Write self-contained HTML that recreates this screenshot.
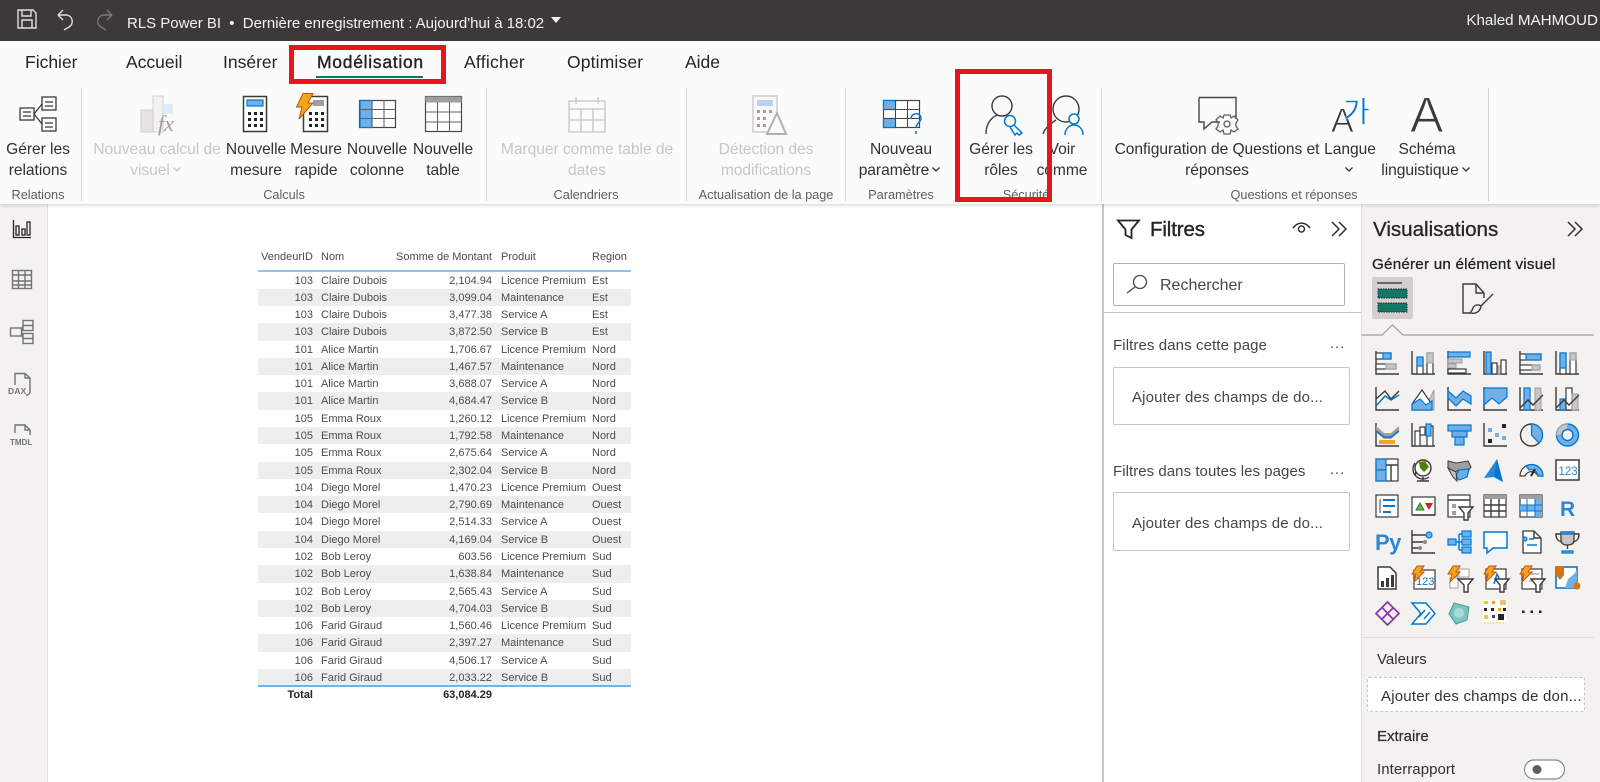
<!DOCTYPE html>
<html lang="fr"><head><meta charset="utf-8"><title>RLS Power BI</title>
<style>
html,body{margin:0;padding:0;width:1600px;height:782px;overflow:hidden;background:#fff;font-family:"Liberation Sans","Noto Sans CJK KR",sans-serif;color:#252423}
body{filter:blur(.3px)}
.a{position:absolute}
.t{position:absolute;white-space:nowrap;line-height:20px}
.c{transform:translateX(-50%);text-align:center}
.r{font-size:15.6px;line-height:21px;letter-spacing:-.05px;color:#323130}
.d{color:#c8c6c4}
.g{font-size:12.8px;color:#605e5c;letter-spacing:-.05px}
.tab{font-size:17.5px;color:#252423;top:52px}
.sep{position:absolute;top:88px;height:113px;width:1px;background:#d6d4d2}
.box{position:absolute;border:1px solid #c8c6c4;border-radius:2px;background:#fff;box-sizing:border-box}
.red{position:absolute;border:5px solid #e8141e;box-sizing:border-box;z-index:5}
.row{display:grid;grid-template-columns:55px 8px 171px 9px 91px 39px;height:17.29px;line-height:17.29px;font-size:11px;color:#4d4b49;white-space:nowrap}
.row:nth-child(even){background:#eeeeee}
.row>span{position:relative;top:1px}
.row span:nth-child(1),.row span:nth-child(3){text-align:right}
.sp{display:inline-block;width:14px}
.p15{font-size:15px;color:#484644}
svg{position:absolute;left:0;top:0;z-index:2}
svg .k{fill:none;stroke:#3b3a39;stroke-width:1.4}
svg .w{fill:#fff;stroke:#3b3a39;stroke-width:1.2}
svg .b{fill:#71afe5;stroke:#0078d4;stroke-width:1.2}
svg .y{fill:#c8c6c4;stroke:#a19f9d;stroke-width:1}
svg .s{fill:none;stroke:#0078d4;stroke-width:1.5}
svg .q{fill:none;stroke:#c0bebc;stroke-width:1.4}
svg .o{fill:#f2a71b;stroke:#ca5010;stroke-width:1}
</style></head><body>

<div class="a" style="left:0;top:0;width:1600px;height:41px;background:#3b3a39"></div>
<div class="t" style="left:127px;top:14px;font-size:15px;color:#f3f2f1;letter-spacing:-.02px">RLS Power BI &nbsp;•&nbsp; Dernière enregistrement : Aujourd'hui à 18:02</div>
<div class="t" style="right:2px;top:11px;font-size:15.2px;color:#f3f2f1">Khaled MAHMOUD</div>

<div class="a" style="left:0;top:41px;width:1600px;height:163px;background:#fbfbfb;box-shadow:0 1px 4px rgba(0,0,0,.18);z-index:1"></div>
<div class="a" style="left:0;top:204px;width:47px;height:578px;background:#f3f2f1;border-right:1px solid #e1dfdd"></div>
<div class="a" style="left:1102px;top:204px;width:2px;height:578px;background:#c8c6c4"></div>
<div class="a" style="left:1361px;top:204px;width:239px;height:578px;background:#f3f2f1;border-left:1px solid #e1dfdd"></div>
<div class="a" style="left:1104px;top:312px;width:257px;height:1px;background:#c8c6c4"></div>
<div class="a" style="left:1362px;top:637px;width:232px;height:1px;background:#e1dfdd"></div>

<div style="position:absolute;z-index:3;left:0;top:0">
<div class="t tab" style="left:25px">Fichier</div>
<div class="t tab" style="left:126px">Accueil</div>
<div class="t tab" style="left:223px">Insérer</div>
<div class="t tab" style="left:317px;-webkit-text-stroke:.4px #252423;letter-spacing:.72px">Modélisation</div>
<div class="t tab" style="left:464px;letter-spacing:.25px">Afficher</div>
<div class="t tab" style="left:567px;letter-spacing:.15px">Optimiser</div>
<div class="t tab" style="left:685px">Aide</div>
<div class="a" style="left:316px;top:76px;width:107px;height:2px;background:#117865"></div>

<div class="sep" style="left:81px"></div><div class="sep" style="left:486px"></div><div class="sep" style="left:686px"></div><div class="sep" style="left:845px"></div><div class="sep" style="left:1101px"></div><div class="sep" style="left:1488px"></div>

<div class="t c r" style="left:38px;top:139px">Gérer les<br>relations</div>
<div class="t c r d" style="left:157px;top:139px">Nouveau calcul de<br>visuel<i class="sp"></i></div>
<div class="t c r" style="left:256px;top:139px">Nouvelle<br>mesure</div>
<div class="t c r" style="left:316px;top:139px">Mesure<br>rapide</div>
<div class="t c r" style="left:377px;top:139px">Nouvelle<br>colonne</div>
<div class="t c r" style="left:443px;top:139px">Nouvelle<br>table</div>
<div class="t c r d" style="left:587px;top:139px">Marquer comme table de<br>dates</div>
<div class="t c r d" style="left:766px;top:139px">Détection des<br>modifications</div>
<div class="t c r" style="left:901px;top:139px">Nouveau<br>paramètre<i class="sp"></i></div>
<div class="t c r" style="left:1001px;top:139px">Gérer les<br>rôles</div>
<div class="t c r" style="left:1062px;top:139px">Voir<br>comme</div>
<div class="t c r" style="left:1217px;top:139px">Configuration de Questions et<br>réponses</div>
<div class="t c r" style="left:1350px;top:139px">Langue</div>
<div class="t c r" style="left:1427px;top:139px">Schéma<br>linguistique<i class="sp"></i></div>

<div class="t c g" style="left:38px;top:185px">Relations</div>
<div class="t c g" style="left:284px;top:185px">Calculs</div>
<div class="t c g" style="left:586px;top:185px">Calendriers</div>
<div class="t c g" style="left:766px;top:185px">Actualisation de la page</div>
<div class="t c g" style="left:901px;top:185px">Paramètres</div>
<div class="t c g" style="left:1026px;top:185px">Sécurité</div>
<div class="t c g" style="left:1294px;top:185px">Questions et réponses</div>
</div>

<div class="red" style="left:289px;top:45px;width:157px;height:39px"></div>
<div class="red" style="left:955px;top:69px;width:97px;height:133px"></div>

<!-- table -->
<div class="a" style="left:258px;top:246px;width:373px">
<div class="row" style="height:20px;line-height:20px;background:none"><span>VendeurID</span><i></i><span style="display:none"></span><span style="position:relative"><span class="a" style="left:0">Nom</span><span class="a" style="right:0;text-align:right">Somme de Montant</span></span><i></i><span>Produit</span><span>Region</span></div>
</div>
<div class="a" style="left:258px;top:270px;width:373px;height:1.5px;background:#8fc3ec"></div>
<div class="a" style="left:258px;top:271.5px;width:373px">
<div class="row"><span>103</span><i></i><span style="text-align:left;position:relative">Claire Dubois<em class="a" style="right:0;font-style:normal">2,104.94</em></span><i></i><span>Licence Premium</span><span>Est</span></div>
<div class="row"><span>103</span><i></i><span style="text-align:left;position:relative">Claire Dubois<em class="a" style="right:0;font-style:normal">3,099.04</em></span><i></i><span>Maintenance</span><span>Est</span></div>
<div class="row"><span>103</span><i></i><span style="text-align:left;position:relative">Claire Dubois<em class="a" style="right:0;font-style:normal">3,477.38</em></span><i></i><span>Service A</span><span>Est</span></div>
<div class="row"><span>103</span><i></i><span style="text-align:left;position:relative">Claire Dubois<em class="a" style="right:0;font-style:normal">3,872.50</em></span><i></i><span>Service B</span><span>Est</span></div>
<div class="row"><span>101</span><i></i><span style="text-align:left;position:relative">Alice Martin<em class="a" style="right:0;font-style:normal">1,706.67</em></span><i></i><span>Licence Premium</span><span>Nord</span></div>
<div class="row"><span>101</span><i></i><span style="text-align:left;position:relative">Alice Martin<em class="a" style="right:0;font-style:normal">1,467.57</em></span><i></i><span>Maintenance</span><span>Nord</span></div>
<div class="row"><span>101</span><i></i><span style="text-align:left;position:relative">Alice Martin<em class="a" style="right:0;font-style:normal">3,688.07</em></span><i></i><span>Service A</span><span>Nord</span></div>
<div class="row"><span>101</span><i></i><span style="text-align:left;position:relative">Alice Martin<em class="a" style="right:0;font-style:normal">4,684.47</em></span><i></i><span>Service B</span><span>Nord</span></div>
<div class="row"><span>105</span><i></i><span style="text-align:left;position:relative">Emma Roux<em class="a" style="right:0;font-style:normal">1,260.12</em></span><i></i><span>Licence Premium</span><span>Nord</span></div>
<div class="row"><span>105</span><i></i><span style="text-align:left;position:relative">Emma Roux<em class="a" style="right:0;font-style:normal">1,792.58</em></span><i></i><span>Maintenance</span><span>Nord</span></div>
<div class="row"><span>105</span><i></i><span style="text-align:left;position:relative">Emma Roux<em class="a" style="right:0;font-style:normal">2,675.64</em></span><i></i><span>Service A</span><span>Nord</span></div>
<div class="row"><span>105</span><i></i><span style="text-align:left;position:relative">Emma Roux<em class="a" style="right:0;font-style:normal">2,302.04</em></span><i></i><span>Service B</span><span>Nord</span></div>
<div class="row"><span>104</span><i></i><span style="text-align:left;position:relative">Diego Morel<em class="a" style="right:0;font-style:normal">1,470.23</em></span><i></i><span>Licence Premium</span><span>Ouest</span></div>
<div class="row"><span>104</span><i></i><span style="text-align:left;position:relative">Diego Morel<em class="a" style="right:0;font-style:normal">2,790.69</em></span><i></i><span>Maintenance</span><span>Ouest</span></div>
<div class="row"><span>104</span><i></i><span style="text-align:left;position:relative">Diego Morel<em class="a" style="right:0;font-style:normal">2,514.33</em></span><i></i><span>Service A</span><span>Ouest</span></div>
<div class="row"><span>104</span><i></i><span style="text-align:left;position:relative">Diego Morel<em class="a" style="right:0;font-style:normal">4,169.04</em></span><i></i><span>Service B</span><span>Ouest</span></div>
<div class="row"><span>102</span><i></i><span style="text-align:left;position:relative">Bob Leroy<em class="a" style="right:0;font-style:normal">603.56</em></span><i></i><span>Licence Premium</span><span>Sud</span></div>
<div class="row"><span>102</span><i></i><span style="text-align:left;position:relative">Bob Leroy<em class="a" style="right:0;font-style:normal">1,638.84</em></span><i></i><span>Maintenance</span><span>Sud</span></div>
<div class="row"><span>102</span><i></i><span style="text-align:left;position:relative">Bob Leroy<em class="a" style="right:0;font-style:normal">2,565.43</em></span><i></i><span>Service A</span><span>Sud</span></div>
<div class="row"><span>102</span><i></i><span style="text-align:left;position:relative">Bob Leroy<em class="a" style="right:0;font-style:normal">4,704.03</em></span><i></i><span>Service B</span><span>Sud</span></div>
<div class="row"><span>106</span><i></i><span style="text-align:left;position:relative">Farid Giraud<em class="a" style="right:0;font-style:normal">1,560.46</em></span><i></i><span>Licence Premium</span><span>Sud</span></div>
<div class="row"><span>106</span><i></i><span style="text-align:left;position:relative">Farid Giraud<em class="a" style="right:0;font-style:normal">2,397.27</em></span><i></i><span>Maintenance</span><span>Sud</span></div>
<div class="row"><span>106</span><i></i><span style="text-align:left;position:relative">Farid Giraud<em class="a" style="right:0;font-style:normal">4,506.17</em></span><i></i><span>Service A</span><span>Sud</span></div>
<div class="row"><span>106</span><i></i><span style="text-align:left;position:relative">Farid Giraud<em class="a" style="right:0;font-style:normal">2,033.22</em></span><i></i><span>Service B</span><span>Sud</span></div>
</div>
<div class="a" style="left:258px;top:685px;width:373px;height:1.6px;background:#6cb4ea"></div>
<div class="t" style="right:1287px;top:685px;font-size:11px;font-weight:bold;color:#252423">Total</div>
<div class="t" style="right:1108px;top:685px;font-size:11px;font-weight:bold;color:#252423">63,084.29</div>

<!-- filters -->
<div class="t" style="left:1150px;top:220px;font-size:20.4px;-webkit-text-stroke:.4px #252423;letter-spacing:-.1px">Filtres</div>
<div class="box" style="left:1113px;top:263px;width:232px;height:43px;border-color:#b3b0ad"></div>
<div class="t" style="left:1160px;top:276px;font-size:16px;color:#484644">Rechercher</div>
<div class="t p15" style="left:1113px;top:336px;letter-spacing:.1px">Filtres dans cette page</div>
<div class="t" style="left:1330px;top:334px;font-size:14.6px;color:#484644;letter-spacing:1px">...</div>
<div class="box" style="left:1113px;top:367px;width:237px;height:58px"></div>
<div class="t p15" style="left:1132px;top:388px;letter-spacing:.16px">Ajouter des champs de do...</div>
<div class="t p15" style="left:1113px;top:462px;letter-spacing:.05px">Filtres dans toutes les pages</div>
<div class="t" style="left:1330px;top:460px;font-size:14.6px;color:#484644;letter-spacing:1px">...</div>
<div class="box" style="left:1113px;top:492px;width:237px;height:59px"></div>
<div class="t p15" style="left:1132px;top:514px;letter-spacing:.16px">Ajouter des champs de do...</div>

<!-- viz -->
<div class="t" style="left:1373px;top:220px;font-size:20.6px;-webkit-text-stroke:.3px #252423;letter-spacing:-.02px">Visualisations</div>
<div class="t" style="left:1372px;top:255px;font-size:15.2px;-webkit-text-stroke:.3px #252423;letter-spacing:.22px">Générer un élément visuel</div>
<div class="a" style="left:1372px;top:277px;width:41px;height:42px;background:#d2d0ce;border-radius:2px"></div>
<div class="t p15" style="left:1377px;top:650px;color:#323130">Valeurs</div>
<div class="a" style="left:1367px;top:677px;width:218px;height:35px;box-sizing:border-box;background:#fff;border:1px dashed #c8c6c4;border-radius:2px"></div>
<div class="t p15" style="left:1381px;top:687px;color:#323130;letter-spacing:.2px">Ajouter des champs de don...</div>
<div class="t" style="left:1377px;top:727px;font-size:15px;-webkit-text-stroke:.25px #323130;color:#323130">Extraire</div>
<div class="t p15" style="left:1377px;top:760px;color:#323130;letter-spacing:.05px">Interrapport</div>

<svg width="1600" height="782" viewBox="0 0 1600 782" xmlns="http://www.w3.org/2000/svg">
<!-- title icons -->
<g fill="none" stroke="#e1dfdd" stroke-width="1.4">
<path d="M18 10H33L36 13V28H18Z M22 10V16H31V10 M22 28V20H32V28"/>
<path d="M58 15H67A6.5 6.5 0 0 1 69 27L64 30 M58 15L63 10 M58 15L63 20"/>
</g>
<g fill="none" stroke="#797775" stroke-width="1.4"><path d="M112 15H103A6.5 6.5 0 0 0 101 27L106 30 M112 15L107 10 M112 15L107 20"/></g>
<path d="M551 17H561L556 23Z" fill="#f3f2f1"/>

<!-- chevrons -->
<g fill="none" stroke-width="1.3"><path d="M173.500 167.500L177 171L180.500 167.500" stroke="#c8c6c4"/><path d="M932.500 167.500L936 171L939.500 167.500M1345.500 167.500L1349 171L1352.500 167.500M1462.500 167.500L1466 171L1469.500 167.500" stroke="#323130"/></g>

<!-- ribbon icons -->
<g>
<g fill="none" stroke="#3b3a39" stroke-width="1.3">
<rect x="20" y="108" width="14" height="12"/><rect x="42" y="97" width="14" height="13"/><rect x="42" y="118" width="14" height="13"/>
<path d="M34 114L42 104M34 114L42 124M23 112H31M23 116H31M45 102H53M45 106H53M45 123H53M45 127H53"/></g>
<g><rect x="141" y="110" width="12" height="22" fill="#e6e5e4" stroke="#d2d0ce"/><rect x="153" y="96" width="10" height="36" fill="#f3f2f1" stroke="#d2d0ce"/><rect x="163" y="104" width="10" height="10" fill="#deecf9"/>
<text x="158" y="131" font-family="Liberation Serif" font-style="italic" font-size="22" fill="#a19f9d">fx</text></g>
<g><rect x="243.500" y="96.500" width="23" height="35" fill="#fff" stroke="#3b3a39" stroke-width="1.5"/><rect x="247" y="100" width="16" height="6" class="b"/>
<path d="M248 112h3v3h-3zM254 112h3v3h-3zM260 112h3v3h-3zM248 118h3v3h-3zM254 118h3v3h-3zM260 118h3v3h-3zM248 124h3v3h-3zM254 124h3v3h-3zM260 124h3v3h-3z" fill="#252423"/></g>
<g><rect x="303.500" y="96.500" width="24" height="35" fill="#fff" stroke="#3b3a39" stroke-width="1.5"/><rect x="313" y="100" width="11" height="6" fill="#a19f9d"/>
<path d="M309 112h3v3h-3zM315 112h3v3h-3zM321 112h3v3h-3zM309 118h3v3h-3zM315 118h3v3h-3zM321 118h3v3h-3zM309 124h3v3h-3zM315 124h3v3h-3zM321 124h3v3h-3z" fill="#252423"/>
<path class="o" d="M303 93.500H313L308 103H313L299 119L302 107H296.500Z"/></g>
<g><rect x="359.500" y="100.500" width="36" height="27" fill="#fff" stroke="#484644" stroke-width="1.2"/><rect x="360" y="100.500" width="12" height="27" class="b"/><path d="M372 100V128M384 100V128M360 109.500H395M360 118.500H395" stroke="#605e5c" fill="none"/><path d="M360 118.500H372" stroke="#0078d4"/></g>
<g><rect x="425.500" y="96.500" width="36" height="35" fill="#fff" stroke="#484644" stroke-width="1.2"/><rect x="425.500" y="96.500" width="36" height="6" fill="#a19f9d"/><path d="M437.500 102V132M449.500 102V132M426 112H461M426 122H461" stroke="#605e5c" fill="none"/></g>
<g fill="none" stroke="#c8c6c4" stroke-width="1.3"><rect x="569" y="101" width="36" height="31"/><path d="M569 109H605M581 109V132M593 109V132M569 120H605M576 97V104M598 97V104"/></g>
<g><rect x="753" y="96" width="24" height="36" fill="#faf9f8" stroke="#c8c6c4" stroke-width="1.3"/><rect x="757" y="100" width="16" height="6" fill="#b4d6f2"/><path d="M757 110h3v3h-3zM763 110h3v3h-3zM769 110h3v3h-3zM757 117h3v3h-3zM763 117h3v3h-3zM757 124h3v3h-3zM763 124h3v3h-3z" fill="#a19f9d"/><path d="M777 113L786 134H767Z" fill="#fbfbfb" stroke="#b3b0ad" stroke-width="2"/></g>
<g><rect x="883.500" y="100.500" width="36" height="27" fill="#fff" stroke="#484644" stroke-width="1.2"/><rect x="883.500" y="100.500" width="12" height="9" class="b"/><rect x="883.500" y="118.500" width="12" height="9" class="b"/><path d="M907.500 100V128M884 109.500H919M884 118.500H919M895.500 100V128" stroke="#484644" fill="none"/>
<path d="M911 119C911 112 921 112 921 118.500C921 122.500 916 123 916 128M916 131V134" class="s" stroke-width="1.8"/></g>
<g fill="none" stroke="#3b3a39" stroke-width="1.4"><circle cx="1002" cy="106" r="10"/><path d="M986 134C986 124 991 118 997 115"/></g>
<g class="s"><circle cx="1010" cy="121" r="5.500" fill="#fbfbfb"/><path d="M1014 125L1022 133L1019 135L1017 133L1015 135L1010 127"/></g>
<g fill="none" stroke="#3b3a39" stroke-width="1.4"><circle cx="1066" cy="109" r="13"/><path d="M1043 134C1045 128 1050 124 1056 120"/></g>
<g class="s"><circle cx="1074" cy="119" r="5" fill="#fbfbfb"/><path d="M1065 135C1065 128 1070 125 1074 125C1078 125 1083 128 1083 135"/></g>
<path d="M1199 97.500H1236V119M1220 122H1212L1204 129V122H1199V97.500" fill="none" stroke="#484644" stroke-width="1.4"/>
<g fill="none" stroke="#605e5c" stroke-width="1.3"><circle cx="1227" cy="124" r="3"/><path d="M1224 115H1230L1231 118L1234 116L1238 120L1236 123V126L1238 129L1234 132L1231 130L1230 134H1224L1223 130L1220 132L1216 129L1218 126V122L1216 120L1220 116L1223 118Z"/></g>
<text x="1331" y="132" font-size="34" fill="#3b3a39" stroke="#fbfbfb" stroke-width=".8" font-family="Liberation Sans">A</text>
<text x="1343" y="122" font-size="29" fill="#0078d4" font-family="Noto Sans CJK KR" stroke="#fbfbfb" stroke-width=".4">가</text>
<text x="1410" y="132" font-size="50" fill="#3b3a39" stroke="#fbfbfb" stroke-width="1.100" font-family="Liberation Sans">A</text>
</g>

<!-- left rail icons -->
<g fill="none" stroke="#252423" stroke-width="1.3"><path d="M13.500 220V237.500H31"/><rect x="16" y="226" width="3" height="9"/><rect x="22" y="229" width="3" height="6"/><rect x="27" y="222" width="3" height="13"/></g>
<g fill="none" stroke="#737373" stroke-width="1.4"><rect x="12.500" y="270.500" width="19" height="18"/><path d="M12 275H32M18.500 270V289M25 270V289M12 281H32M12 285H32"/>
<rect x="10.500" y="328" width="11" height="8"/><rect x="23" y="320.500" width="10" height="10"/><rect x="23" y="333.500" width="10" height="10"/><path d="M21.500 332L23 325M21.500 332L23 338M23 325.500H33M23 338.500H33"/>
<path d="M15 385V373.500H25L30 378V392C30 394 28 395 26 395"/><path d="M25 373.500V378H30"/>
<path d="M15 433V425H25L30 430V435M25 425V430H30"/></g>
<text x="8" y="394" font-size="8.500" font-weight="bold" fill="#737373" font-family="Liberation Sans" letter-spacing=".2">DAX</text>
<text x="10" y="445" font-size="8" font-weight="bold" fill="#737373" font-family="Liberation Sans">TMDL</text>

<!-- filter icons -->
<g fill="none" stroke="#252423" stroke-width="1.800"><path d="M1118 220.500H1139L1131.500 229.500V238L1125.500 235V229.500Z"/></g>
<g fill="none" stroke="#323130" stroke-width="1.500"><path d="M1293 228C1298 221.500 1305 221.500 1310 228"/><circle cx="1301.500" cy="229" r="3"/><path d="M1332 222L1339 229L1332 236M1339 222L1346 229L1339 236M1568 222L1575 229L1568 236M1575 222L1582 229L1575 236"/></g>
<g fill="none" stroke="#484644" stroke-width="1.300"><circle cx="1140" cy="282" r="6.500"/><path d="M1135 287L1127 293"/></g>

<!-- viz top icons -->
<g><path d="M1377 283H1402" stroke="#252423" stroke-width="1.300"/>
<rect x="1378" y="289" width="29" height="9" fill="#117865" stroke="#252423" stroke-dasharray="1.500 1"/><rect x="1378" y="303" width="29" height="9" fill="#117865" stroke="#252423" stroke-dasharray="1.500 1"/></g>
<g fill="none" stroke="#3b3a39" stroke-width="1.400"><path d="M1470 313H1463V284H1476L1484 293V298M1476 284V293H1484"/><path d="M1493 294L1481 306M1470 313C1474 314 1480 313 1481 306C1478 304 1474 305 1473 308C1472 311 1471 312 1470 313Z"/></g>
<path d="M1362 335H1382L1392.500 325L1403 335H1594" fill="none" stroke="#a19f9d" stroke-width="1.200"/>

<!-- toggle -->
<rect x="1524.500" y="760" width="40" height="19" rx="9.500" fill="#fff" stroke="#8a8886" stroke-width="1.200"/><circle cx="1537" cy="769.500" r="4.500" fill="#605e5c"/>

<!-- GRID -->
<g>
<!-- row 1 -->
<g transform="translate(1376,351)"><path class="k" d="M0 0V23H23"/><rect x="0" y="2" width="15" height="6" class="w"/><rect x="7" y="2" width="8" height="6" class="b"/><rect x="0" y="13" width="20" height="5" class="w"/><rect x="10" y="13" width="10" height="5" class="y"/></g>
<g transform="translate(1412,351)"><path class="k" d="M0 0V23H23"/><rect x="5" y="8" width="6" height="15" class="w"/><rect x="5" y="6" width="6" height="9" class="b"/><rect x="15" y="2" width="6" height="21" class="w"/><rect x="15" y="2" width="6" height="10" class="y"/></g>
<g transform="translate(1448,351)"><path class="k" d="M0 0V23H23"/><rect x="0" y="1" width="22" height="5" class="b"/><rect x="0" y="8" width="14" height="4" class="y"/><rect x="0" y="13" width="8" height="4" class="y"/><rect x="0" y="18" width="18" height="4" class="w"/></g>
<g transform="translate(1484,351)"><path class="k" d="M0 0V23H23"/><rect x="2" y="1" width="5" height="22" class="b"/><rect x="8" y="12" width="5" height="11" class="w"/><rect x="14" y="15" width="3" height="8" class="y"/><rect x="17" y="9" width="5" height="14" class="w"/></g>
<g transform="translate(1520,351)"><path class="k" d="M0 0V23H23"/><rect x="0" y="3" width="21" height="6" class="w"/><rect x="6" y="3" width="15" height="6" class="b"/><rect x="0" y="14" width="20" height="5" class="w"/><rect x="12" y="14" width="8" height="5" class="y"/></g>
<g transform="translate(1556,351)"><path class="k" d="M0 0V23H23"/><rect x="4" y="2" width="6" height="21" class="w"/><rect x="4" y="2" width="6" height="15" class="b"/><rect x="14" y="2" width="6" height="21" class="w"/><rect x="14" y="2" width="6" height="7" class="y"/></g>
<!-- row 2 -->
<g transform="translate(1376,387)"><path class="k" d="M0 0V23H23"/><path d="M0 12L9 4L15 12L23 4" class="k"/><path d="M0 19L9 9L15 13L23 8" class="s"/></g>
<g transform="translate(1412,387)"><path d="M10 3L17 13L22 3V23H16Z" class="y"/><path d="M0 17L10 3L19 16V23H0Z" class="w"/><path d="M0 17L8 12L14 18L20 14V23H0Z" class="b"/></g>
<g transform="translate(1448,387)"><path class="k" d="M0 0V23H23"/><path d="M0 4L8 11L15 4L23 9V17L15 12L8 19L0 11Z" class="b"/></g>
<g transform="translate(1484,387)"><path class="k" d="M0 0V23H23"/><path d="M0 1H23V10L15 17L8 11L0 18Z" class="b"/></g>
<g transform="translate(1520,387)"><path class="k" d="M0 0V23H23"/><rect x="4" y="1" width="6" height="22" class="b"/><rect x="15" y="1" width="6" height="22" class="y"/><path d="M0 21L8 13L13 18L23 8" class="k"/></g>
<g transform="translate(1556,387)"><path class="k" d="M0 0V23H23"/><rect x="4" y="12" width="6" height="11" class="b"/><rect x="10" y="1" width="6" height="22" class="w"/><rect x="16" y="7" width="6" height="16" class="y"/><path d="M0 21L8 13L13 18L23 8" class="k"/></g>
<!-- row 3 -->
<g transform="translate(1376,423)"><path class="k" d="M0 0V23H23"/><path d="M0 3L8 10H15L23 3V9L15 16H8L0 9Z" fill="#a19f9d"/><path d="M0 8L8 14H15L23 8" class="s" stroke-width="2.500"/><rect x="3" y="17" width="16" height="4" fill="#f2a71b"/></g>
<g transform="translate(1412,423)"><path class="k" d="M0 0V23H23"/><rect x="3" y="8" width="5" height="15" class="w"/><rect x="8" y="4" width="5" height="8" class="w"/><rect x="15" y="3" width="6" height="20" class="w"/><rect x="14" y="1" width="5" height="12" class="b"/></g>
<g transform="translate(1448,423)"><rect x="0" y="2" width="23" height="6" class="b"/><rect x="4" y="8" width="15" height="6" class="b"/><rect x="7" y="14" width="9" height="8" class="b"/></g>
<g transform="translate(1484,423)"><path class="k" d="M0 0V23H23"/><rect x="4" y="5" width="4" height="4" fill="#71afe5"/><rect x="11" y="10" width="4" height="4" fill="#71afe5"/><rect x="18" y="13" width="4" height="4" fill="#71afe5"/><rect x="18" y="1" width="4" height="4" fill="#252423"/><rect x="4" y="16" width="4" height="4" fill="#252423"/></g>
<g transform="translate(1519,423)"><circle cx="12.500" cy="12" r="11" fill="#f3f2f1" stroke="#3b3a39" stroke-width="1.400"/><path d="M12.500 12V1A11 11 0 0 1 20 20Z" class="b"/></g>
<g transform="translate(1555,423)"><circle cx="12.500" cy="12" r="11" fill="#71afe5" stroke="#0078d4" stroke-width="1.400"/><path d="M12.500 12L1.500 12A11 11 0 0 1 12.500 1Z" fill="#c8c6c4" stroke="#a19f9d"/><circle cx="12.500" cy="12" r="5.500" fill="#f3f2f1" stroke="#0078d4" stroke-width="1.400"/></g>
<!-- row 4 -->
<g transform="translate(1375,458)"><rect x="1" y="1" width="22" height="22" class="w"/><rect x="1" y="1" width="10" height="11" class="b"/><rect x="1" y="12" width="10" height="11" class="b"/><path d="M11 7H23M16 7V23" class="k"/></g>
<g transform="translate(1411,458)"><circle cx="12" cy="10" r="8" fill="#fff" stroke="#3b3a39" stroke-width="1.400"/><path d="M8 4L14 3L18 9L13 14L9 10Z" fill="#498205"/><path d="M5 14L4 18 M12 19V23M6 23H18M4 5A10 10 0 0 0 18 19" class="k"/></g>
<g transform="translate(1447,458)"><path d="M1 3L9 5L21 3L24 9L20 15L12 12L8 14L1 10Z" fill="#a19f9d" stroke="#3b3a39"/><path d="M12 12L22 11L20 19L12 22L9 18Z" class="b"/><path d="M1 10L6 19L10 23L9 14Z" fill="#c8c6c4" stroke="#3b3a39"/></g>
<g transform="translate(1483,458)"><path d="M14 1L20 24L11 19L1 20Z" fill="#2b88d8"/><path d="M14 1L20 24L11 19Z" fill="#0078d4"/></g>
<g transform="translate(1519,458)"><path d="M1 18A11.500 11.500 0 0 1 24 18H19A7 7 0 0 0 6 18Z" class="w"/><path d="M7 8A11.500 11.500 0 0 1 24 18H19A7 7 0 0 0 10 12Z" class="b"/><path d="M12 18L16 11" stroke="#252423" stroke-width="2"/></g>
<g transform="translate(1555,458)"><rect x="1" y="2" width="23" height="20" fill="#fff" stroke="#484644" stroke-width="1.600"/><text x="3.500" y="17" font-size="11.500" fill="#2b88d8" font-family="Liberation Sans">123</text></g>
<!-- row 5 -->
<g transform="translate(1375,494)"><rect x="1" y="1" width="22" height="22" class="w"/><path d="M5 5V19" stroke="#a19f9d" stroke-width="2"/><path d="M8 6H20M8 12H20M8 18H16" stroke="#0078d4" stroke-width="2"/></g>
<g transform="translate(1411,494)"><rect x="1" y="3" width="23" height="18" fill="#fff" stroke="#484644" stroke-width="1.300"/><path d="M1 21H24" stroke="#605e5c" stroke-width="2"/><path d="M5 16L9 9L13 16Z" fill="#7fba00" stroke="#117865"/><path d="M14 9H22L18 16Z" fill="#e8141e"/></g>
<g transform="translate(1447,494)"><rect x="1" y="1" width="22" height="22" class="w"/><path d="M1 6H23" class="k"/><rect x="5" y="10" width="4" height="4" fill="#a19f9d"/><rect x="5" y="17" width="4" height="4" fill="#a19f9d"/><path d="M12 13H26L21 19V26H17V19Z" fill="#fff" stroke="#3b3a39" stroke-width="1.400"/></g>
<g transform="translate(1483,494)"><rect x="1" y="1" width="22" height="22" class="w"/><rect x="1" y="1" width="22" height="4" fill="#a19f9d"/><path d="M8 5V23M16 5V23M1 11H23M1 17H23" class="k" stroke-width="1"/></g>
<g transform="translate(1519,494)"><rect x="1" y="1" width="22" height="22" class="w"/><rect x="1" y="1" width="22" height="4" fill="#a19f9d"/><rect x="16" y="5" width="7" height="18" fill="#71afe5"/><rect x="1" y="11" width="22" height="6" fill="#71afe5"/><path d="M8 5V23M16 5V23M1 11H23M1 17H23" stroke="#0078d4" fill="none"/></g>
<text x="1560" y="516" font-size="21" font-weight="bold" fill="#2b88d8" font-family="Liberation Sans">R</text>
<!-- row 6 -->
<text x="1375" y="550" font-size="22" font-weight="bold" fill="#2b88d8" font-family="Liberation Sans" letter-spacing="-.5">Py</text>
<g transform="translate(1411,530)"><path class="k" d="M1 0V23H24"/><path d="M1 5H16M1 12H12M1 18H8" class="k" stroke-width="1"/><circle cx="18" cy="5" r="3" class="b"/><circle cx="14" cy="12" r="2" fill="#8a8886"/><circle cx="9" cy="18" r="2" fill="#8a8886"/></g>
<g transform="translate(1447,530)"><rect x="1" y="9" width="8" height="6" class="b"/><rect x="15" y="1" width="9" height="6" class="b"/><rect x="15" y="9" width="9" height="6" class="b"/><rect x="15" y="17" width="9" height="6" class="b"/><path d="M9 12H12M12 4V20M12 4H15M12 20H15M12 12H15" class="s"/></g>
<g transform="translate(1483,530)"><path d="M1 2H24V18H10L4 23V18H1Z" fill="#fff" stroke="#0078d4" stroke-width="1.500"/></g>
<g transform="translate(1519,530)"><path d="M4 1H15L22 8V23H4Z" fill="#fff" stroke="#3b3a39" stroke-width="1.300"/><path d="M15 1V8H22" class="k"/><circle cx="6" cy="9" r="2" class="b"/><path d="M10 9H15M8 15H18" class="s"/></g>
<g transform="translate(1555,530)"><path d="M6 2H19V10C19 14 16 15 12.500 15C9 15 6 14 6 10Z" fill="#c8c6c4" stroke="#3b3a39" stroke-width="1.300"/><path d="M6 2H19V5H6Z" fill="#2b88d8"/><path d="M6 4H1C1 9 3 11 7 12M19 4H24C24 9 22 11 18 12M12.500 15V19" class="k"/><path d="M7 21H18V23H7Z" class="b"/></g>
<!-- row 7 -->
<g transform="translate(1377,566)"><path d="M1 1H13L19 7V23H1Z" fill="#fff" stroke="#3b3a39" stroke-width="1.500"/><rect x="4" y="15" width="3" height="6" fill="#3b3a39"/><rect x="9" y="12" width="3" height="9" fill="#3b3a39"/><rect x="14" y="9" width="3" height="12" fill="#3b3a39"/></g>
<g transform="translate(1411,566)"><rect x="3" y="4" width="21" height="19" fill="#fff" stroke="#484644" stroke-width="1.300"/><text x="5" y="19" font-size="11" fill="#0078d4" font-family="Liberation Sans">123</text><path class="o" d="M6 0H13L9 6H13L3 16L5 8H1Z"/></g>
<g transform="translate(1447,566)"><rect x="12" y="3" width="10" height="8" fill="#fff" stroke="#a19f9d"/><rect x="3" y="12" width="8" height="10" fill="#fff" stroke="#a19f9d"/><rect x="6" y="8" width="5" height="3" fill="#71afe5"/><path class="o" d="M6 0H13L9 6H13L3 16L5 8H1Z"/><path d="M11 13H26L21 19V26H17V19Z" fill="#fff" stroke="#3b3a39" stroke-width="1.400"/></g>
<g transform="translate(1483,566)"><rect x="3" y="3" width="20" height="20" fill="#fff" stroke="#3b3a39" stroke-width="1.200"/><path d="M11 18L14 8L17 14" class="s"/><path class="o" d="M6 0H13L9 6H13L3 16L5 8H1Z"/><path d="M12 13H26L21 19V26H17V19Z" fill="#fff" stroke="#3b3a39" stroke-width="1.400"/></g>
<g transform="translate(1519,566)"><rect x="3" y="3" width="20" height="20" fill="#fff" stroke="#3b3a39" stroke-width="1.200"/><path d="M10 8H20M10 15H14" stroke="#8a8886"/><path class="o" d="M6 0H13L9 6H13L3 16L5 8H1Z"/><path d="M12 13H26L21 19V26H17V19Z" fill="#fff" stroke="#3b3a39" stroke-width="1.400"/></g>
<g transform="translate(1555,566)"><rect x="1" y="1" width="21" height="21" fill="#fff" stroke="#0078d4" stroke-width="1.600"/><path d="M10 22L13 13L19 8L22 4V22Z" fill="#71afe5"/><path d="M1 0H9V9L5 14L1 9Z" fill="#d9730d"/><circle cx="22" cy="20" r="3.500" fill="#d9730d"/></g>
<!-- row 8 -->
<g transform="translate(1375,601)" fill="none" stroke="#8e35a8" stroke-width="1.700"><path d="M12.500 1L24 12.500L12.500 24L1 12.500Z M12.500 1L7 6.500L18 18 M18 7L7 18"/></g>
<g transform="translate(1411,601)" fill="#fff" stroke="#0078d4" stroke-width="1.500"><path d="M1 2H15L24 12.500L15 23H1L10 12.500Z"/><path d="M8 16L14 9"/><path d="M13 18L19 11"/></g>
<g transform="translate(1447,601)"><path d="M7 2L22 6L20 19L9 23L2 13Z" fill="#7fc4c3" stroke="#419c9b"/><circle cx="12" cy="12" r="5" fill="#a7dad8"/></g>
<g transform="translate(1483,600)"><rect width="24" height="24" fill="#fff"/><rect x="1" y="1" width="4" height="3" fill="#f2c811"/><rect x="9" y="1" width="3" height="3" fill="#f2a71b"/><rect x="17" y="0" width="6" height="5" fill="#e8c36b"/><rect x="1" y="8" width="3" height="3" fill="#252423"/><rect x="8" y="8" width="3" height="3" fill="#252423"/><rect x="15" y="8" width="3" height="3" fill="#f2a71b"/><rect x="20" y="8" width="3" height="3" fill="#252423"/><rect x="1" y="15" width="4" height="4" fill="#e8c36b"/><rect x="9" y="15" width="3" height="3" fill="#484644"/><rect x="15" y="14" width="6" height="6" fill="#252423"/><path d="M1 23H23" stroke="#f2c811" stroke-dasharray="2 1"/></g>
<g fill="#252423"><rect x="1522" y="610.500" width="2.500" height="2.500"/><rect x="1530.500" y="610.500" width="2.500" height="2.500"/><rect x="1539" y="610.500" width="2.500" height="2.500"/></g>
</g>
</svg>
</body></html>
